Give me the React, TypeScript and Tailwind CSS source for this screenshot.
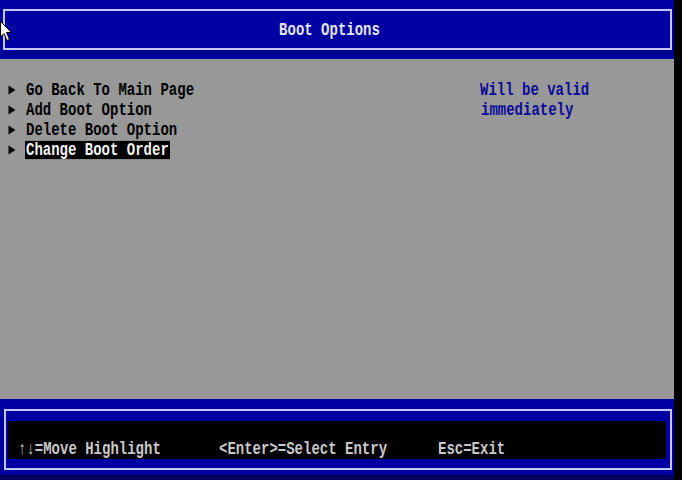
import type { ReactNode } from 'react';

const MENU = ['Go Back To Main Page', 'Add Boot Option', 'Delete Boot Option', 'Change Boot Order'];

const mono = "font-['Liberation_Mono','DejaVu_Sans_Mono',monospace]";

// BIOS glyphs are taller than a regular mono face, stretch them vertically
function Tall({ children, className = '' }: { children: ReactNode; className?: string }) {
  return <span className={`inline-block origin-center scale-y-[1.3] whitespace-pre ${className}`}>{children}</span>;
}

function Arrow() {
  return (
    <svg width="8" height="10" viewBox="0 0 8 10" className="mr-[9px] shrink-0">
      <path d="M0.5 0.5 L7.5 5 L0.5 9.5 Z" fill="#000" />
    </svg>
  );
}

function Cursor() {
  return (
    <svg width="13" height="22" viewBox="0 0 13 22" className="absolute left-0 top-[21px]">
      <path d="M0.5 0.5 L0.5 16 L4 12.5 L7 19.5 L9.5 18.5 L6.5 11.5 L11.5 11.5 Z" fill="#fff" stroke="#000" strokeWidth="1" />
    </svg>
  );
}

export default function App() {
  const selected = 3;

  return (
    <div className={`relative flex h-[480px] w-[682px] bg-black ${mono} text-[14px] leading-[20px] font-bold`}>
      <div className="flex w-[674px] flex-col">
        {/* title bar */}
        <div className="flex h-[59px] flex-col bg-[#0000a2] pt-[9px] pl-[3px] pr-[2px]">
          <div className="flex h-[41px] items-center justify-center border-2 border-[#c6c6f2] pr-[16px] text-[#e4e4ee]">
            <Tall>Boot Options</Tall>
          </div>
          <div className="mt-[2px] h-[2px] bg-[#00007e]" />
        </div>

        {/* menu area */}
        <div className="flex flex-1 bg-[#989898] pt-[21px]">
          <div className="w-[480px] pl-[8px]">
            {MENU.map((label, i) => (
              <div key={label} className="flex h-[20px] items-center">
                <Arrow />
                <Tall className={i === selected ? 'bg-black px-px leading-[14px] text-[#f2f2f2]' : 'px-px text-black'}>
                  {label}
                </Tall>
              </div>
            ))}
          </div>
          <div className="text-[#0a0a9a]">
            <div>
              <Tall>Will be valid</Tall>
            </div>
            <div className="pl-px">
              <Tall>immediately</Tall>
            </div>
          </div>
        </div>

        {/* key help bar */}
        <div className="flex h-[76px] flex-col bg-[#0000a2] pt-[10px] pl-[4px] pr-[2px]">
          <div className="h-[61px] border-2 border-[#c6c6f2] pt-[10px] pl-[2px] pr-[4px]">
            <div className="flex h-[38px] items-start bg-black pt-[18px] pl-[10px] text-[#c8c8c8]">
              <Tall className="w-[201px]">↑↓=Move Highlight</Tall>
              <Tall className="w-[219px]">&lt;Enter&gt;=Select Entry</Tall>
              <Tall>Esc=Exit</Tall>
            </div>
          </div>
        </div>
        <div className="h-[5px] bg-[#00005a]" />
      </div>
      <Cursor />
    </div>
  );
}
